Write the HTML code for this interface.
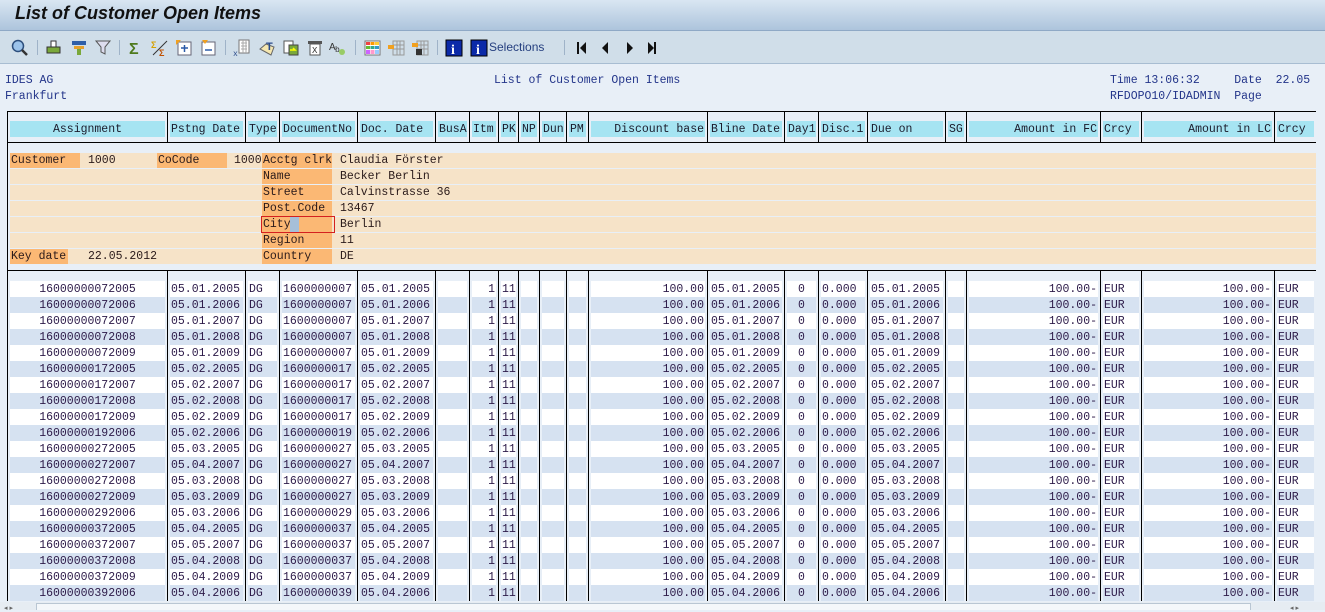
<!DOCTYPE html>
<html><head><meta charset="utf-8"><style>
*{margin:0;padding:0;box-sizing:border-box}
body{width:1325px;height:610px;overflow:hidden;background:#e8eff7;font-family:"Liberation Mono",monospace;font-size:11.5px;position:relative}
.a{position:absolute}
#title{left:0;top:0;width:1325px;height:31px;background:linear-gradient(#d9e6f2,#adc4dc);border-bottom:1px solid #8fa9c6}
#title span{position:absolute;left:15px;top:3px;font:italic bold 18px "Liberation Sans",sans-serif;color:#111}
#tb{left:0;top:31px;width:1325px;height:33px;background:#d0dee9;border-bottom:1px solid #a8bdd2}
.ic{position:absolute;top:8px}
.sep{position:absolute;top:9px;width:1px;height:15px;background:#9fb3c8}
.hd{color:#23358a;line-height:16px}
.row{position:absolute;left:7px;height:16px;display:grid;grid-template-columns:160px 78px 34px 78px 78px 34px 29px 20px 21px 27px 22px 119px 77px 34px 49px 78px 21px 134px 41px 133px 42px;line-height:17px}
.row>div{margin:0 2px 0 3px;white-space:nowrap;overflow:hidden;padding:0 1px;height:16px}
.hr>div{background:#a6e4f2;color:#1b1b2b}
.dr{color:#2c1a48}
.w>div{background:#fff}.b>div{background:#d6e2f1}
.r{text-align:right}.c{text-align:center}
.vl{position:absolute;width:1px;background:#000}
.ob{position:absolute;left:10px;width:1306px;height:15px;background:#f6e3c8}
.ol{position:absolute;height:15px;background:#fbb874;line-height:16px;padding-left:1px;color:#2a1a1a;white-space:nowrap}
.ov{position:absolute;line-height:16px;color:#2a1a1a}
</style></head><body>
<div id="title" class="a"><span>List of Customer Open Items</span></div>
<div id="tb" class="a">
<svg class="ic" style="left:11px" width="18" height="18"><circle cx="7" cy="7" r="5.5" fill="#9cc3ea" stroke="#2c4e7c" stroke-width="1.5"/><path d="M11 11l5 5" stroke="#333" stroke-width="2.5"/></svg>
<div class="sep" style="left:37px"></div>
<svg class="ic" style="left:45px" width="18" height="18"><rect x="6" y="2" width="5" height="6" fill="#fff" stroke="#333"/><rect x="2" y="8" width="13" height="6" fill="#7aa83a" stroke="#333"/></svg>
<svg class="ic" style="left:70px" width="18" height="18"><rect x="2" y="2" width="14" height="4" fill="#2f5fa8"/><rect x="4" y="7" width="10" height="3" fill="#e5a02c"/><rect x="7" y="10" width="4" height="6" fill="#7aa83a"/></svg>
<svg class="ic" style="left:94px" width="18" height="18"><path d="M2 2h14l-5 6v7l-4-2V8z" fill="#dde" stroke="#555"/></svg>
<div class="sep" style="left:119px"></div>
<svg class="ic" style="left:127px" width="18" height="18"><text x="2" y="15" font-size="16" font-weight="bold" fill="#4e7a1c" font-family="Liberation Sans">Σ</text></svg>
<svg class="ic" style="left:151px" width="18" height="18"><text x="0" y="9" font-size="9" font-weight="bold" fill="#d4a000" font-family="Liberation Sans">Σ</text><path d="M2 16L16 2" stroke="#333"/><text x="8" y="17" font-size="9" font-weight="bold" fill="#c05000" font-family="Liberation Sans">Σ</text></svg>
<svg class="ic" style="left:175px" width="18" height="18"><rect x="3" y="3" width="13" height="13" fill="#fff" stroke="#667"/><path d="M6 9h7M9.5 6v7" stroke="#2a5aa8" stroke-width="1.5"/><path d="M1 1h5L1 6z" fill="#f0a020"/></svg>
<svg class="ic" style="left:199px" width="18" height="18"><rect x="3" y="3" width="13" height="13" fill="#fff" stroke="#667"/><path d="M6 11h7" stroke="#2a5aa8" stroke-width="1.5"/><path d="M3 1h6L6 5z" fill="#f0a020"/></svg>
<div class="sep" style="left:225px"></div>
<svg class="ic" style="left:233px" width="18" height="18"><rect x="6" y="1" width="10" height="13" fill="#fff" stroke="#777"/><path d="M8 4h6M8 7h6M8 10h6M10 1v13M13 1v13" stroke="#aaa"/><text x="0" y="17" font-size="8" fill="#2a4a8a">x</text></svg>
<svg class="ic" style="left:258px" width="18" height="18"><path d="M2 10l6-5 8 3-3 8z" fill="#f5e7b0" stroke="#666"/><text x="8" y="11" font-size="11" font-weight="bold" fill="#2a4a8a" font-family="Liberation Sans">T</text></svg>
<svg class="ic" style="left:282px" width="18" height="18"><rect x="2" y="2" width="9" height="12" fill="#fff" stroke="#555"/><rect x="7" y="6" width="9" height="10" fill="#7aa83a" stroke="#444"/><path d="M8 11h5l-2-2" stroke="#ff0" stroke-width="1.5" fill="none"/></svg>
<svg class="ic" style="left:306px" width="18" height="18"><rect x="2" y="2" width="14" height="3" fill="#555"/><rect x="4" y="5" width="10" height="11" fill="#fff" stroke="#555"/><text x="6" y="14" font-size="9" fill="#333">X</text></svg>
<svg class="ic" style="left:329px" width="18" height="18"><text x="0" y="11" font-size="10" fill="#333" font-family="Liberation Sans">A</text><text x="6" y="13" font-size="8" fill="#333">b</text><circle cx="13" cy="13" r="3" fill="#9c6"/></svg>
<div class="sep" style="left:355px"></div>
<svg class="ic" style="left:363px" width="18" height="18"><rect x="2" y="2" width="15" height="14" fill="#fff" stroke="#777"/><rect x="3" y="3" width="4" height="3" fill="#e44"/><rect x="7.5" y="3" width="4" height="3" fill="#f90"/><rect x="12" y="3" width="4" height="3" fill="#fc3"/><rect x="3" y="7" width="4" height="3" fill="#6b3"/><rect x="7.5" y="7" width="4" height="3" fill="#3a8"/><rect x="12" y="7" width="4" height="3" fill="#39c"/><rect x="3" y="11" width="4" height="4" fill="#c6f"/><rect x="7.5" y="11" width="4" height="4" fill="#f9c"/><rect x="12" y="11" width="4" height="4" fill="#9cf"/></svg>
<svg class="ic" style="left:387px" width="18" height="18"><path d="M6 2h11v14H6zM6 6h11M6 10h11M10 2v14M13 2v14" stroke="#999" fill="none"/><rect x="1" y="6" width="6" height="4" fill="#f0a020"/></svg>
<svg class="ic" style="left:411px" width="18" height="18"><path d="M6 2h11v14H6zM6 6h11M6 10h11M10 2v14M13 2v14" stroke="#999" fill="none"/><rect x="1" y="4" width="6" height="4" fill="#f0a020"/><rect x="5" y="10" width="6" height="6" fill="#333"/></svg>
<div class="sep" style="left:437px"></div>
<svg class="ic" style="left:445px" width="18" height="18"><rect x="1" y="1" width="16" height="16" fill="#0b2aa8" stroke="#000"/><text x="6" y="15" font-size="14" font-weight="bold" fill="#fff" font-family="Liberation Serif">i</text></svg>
<svg class="ic" style="left:470px" width="18" height="18"><rect x="1" y="1" width="16" height="16" fill="#0b2aa8" stroke="#000"/><text x="6" y="15" font-size="14" font-weight="bold" fill="#fff" font-family="Liberation Serif">i</text></svg>
<span class="a" style="left:489px;top:9px;font:12px 'Liberation Sans',sans-serif;color:#253f7f">Selections</span>
<div class="sep" style="left:564px"></div>
<svg class="ic" style="left:573px" width="90" height="18"><path d="M5 3v12" stroke="#111" stroke-width="2"/><path d="M13 3v12L7 9z" fill="#111"/><path d="M35 3v12l-6-6z" fill="#111"/><path d="M54 3v12l6-6z" fill="#111"/><path d="M75 3v12l6-6z" fill="#111"/><path d="M82 3v12" stroke="#111" stroke-width="2"/></svg>
</div>
<div class="a hd" style="left:5px;top:73px">IDES AG</div>
<div class="a hd" style="left:5px;top:89px">Frankfurt</div>
<div class="a hd" style="left:494px;top:73px">List of Customer Open Items</div>
<div class="a hd" style="left:1110px;top:73px;white-space:pre">Time 13:06:32     Date  22.05</div>
<div class="a hd" style="left:1110px;top:89px;white-space:pre">RFDOPO10/IDADMIN  Page</div>

<div class="a" style="left:7px;top:111px;width:1309px;height:1px;background:#000"></div>
<div class="a" style="left:7px;top:142px;width:1309px;height:1px;background:#000"></div>
<div class="a" style="left:7px;top:270px;width:1309px;height:1px;background:#000"></div>

<div class="row hr" style="top:121px"><div class="c">Assignment</div><div>Pstng Date</div><div>Type</div><div>DocumentNo</div><div>Doc. Date</div><div>BusA</div><div>Itm</div><div>PK</div><div>NP</div><div>Dun</div><div>PM</div><div class="r">Discount base</div><div>Bline Date</div><div>Day1</div><div>Disc.1</div><div>Due on</div><div>SG</div><div class="r">Amount in FC</div><div>Crcy</div><div class="r">Amount in LC</div><div>Crcy</div></div>

<div class="ob" style="top:153px"></div><div class="ob" style="top:169px"></div><div class="ob" style="top:185px"></div><div class="ob" style="top:201px"></div><div class="ob" style="top:217px"></div><div class="ob" style="top:233px"></div><div class="ob" style="top:249px"></div>
<div class="ol" style="left:10px;top:153px;width:70px">Customer</div><div class="ov" style="left:88px;top:153px">1000</div>
<div class="ol" style="left:157px;top:153px;width:70px">CoCode</div><div class="ov" style="left:234px;top:153px">1000</div>
<div class="ol" style="left:262px;top:153px;width:70px">Acctg clrk</div><div class="ov" style="left:340px;top:153px">Claudia Förster</div>
<div class="ol" style="left:262px;top:169px;width:70px">Name</div><div class="ov" style="left:340px;top:169px">Becker Berlin</div>
<div class="ol" style="left:262px;top:185px;width:70px">Street</div><div class="ov" style="left:340px;top:185px">Calvinstrasse 36</div>
<div class="ol" style="left:262px;top:201px;width:70px">Post.Code</div><div class="ov" style="left:340px;top:201px">13467</div>
<div class="ol" style="left:262px;top:217px;width:70px">City</div><div class="a" style="left:290px;top:217px;width:9px;height:15px;background:#a6bfd8"></div><div class="a" style="left:261px;top:216px;width:74px;height:17px;border:1px solid #d42020"></div><div class="ov" style="left:340px;top:217px">Berlin</div>
<div class="ol" style="left:262px;top:233px;width:70px">Region</div><div class="ov" style="left:340px;top:233px">11</div>
<div class="ol" style="left:10px;top:249px;width:58px">Key date</div><div class="ov" style="left:88px;top:249px">22.05.2012</div>
<div class="ol" style="left:262px;top:249px;width:70px">Country</div><div class="ov" style="left:340px;top:249px">DE</div>

<div class="row dr w" style="top:281px"><div class="c">16000000072005</div><div>05.01.2005</div><div>DG</div><div>1600000007</div><div>05.01.2005</div><div></div><div class="r">1</div><div>11</div><div></div><div></div><div></div><div class="r">100.00</div><div>05.01.2005</div><div class="c">0</div><div>0.000</div><div>05.01.2005</div><div></div><div class="r">100.00-</div><div>EUR</div><div class="r">100.00-</div><div>EUR</div></div>
<div class="row dr b" style="top:297px"><div class="c">16000000072006</div><div>05.01.2006</div><div>DG</div><div>1600000007</div><div>05.01.2006</div><div></div><div class="r">1</div><div>11</div><div></div><div></div><div></div><div class="r">100.00</div><div>05.01.2006</div><div class="c">0</div><div>0.000</div><div>05.01.2006</div><div></div><div class="r">100.00-</div><div>EUR</div><div class="r">100.00-</div><div>EUR</div></div>
<div class="row dr w" style="top:313px"><div class="c">16000000072007</div><div>05.01.2007</div><div>DG</div><div>1600000007</div><div>05.01.2007</div><div></div><div class="r">1</div><div>11</div><div></div><div></div><div></div><div class="r">100.00</div><div>05.01.2007</div><div class="c">0</div><div>0.000</div><div>05.01.2007</div><div></div><div class="r">100.00-</div><div>EUR</div><div class="r">100.00-</div><div>EUR</div></div>
<div class="row dr b" style="top:329px"><div class="c">16000000072008</div><div>05.01.2008</div><div>DG</div><div>1600000007</div><div>05.01.2008</div><div></div><div class="r">1</div><div>11</div><div></div><div></div><div></div><div class="r">100.00</div><div>05.01.2008</div><div class="c">0</div><div>0.000</div><div>05.01.2008</div><div></div><div class="r">100.00-</div><div>EUR</div><div class="r">100.00-</div><div>EUR</div></div>
<div class="row dr w" style="top:345px"><div class="c">16000000072009</div><div>05.01.2009</div><div>DG</div><div>1600000007</div><div>05.01.2009</div><div></div><div class="r">1</div><div>11</div><div></div><div></div><div></div><div class="r">100.00</div><div>05.01.2009</div><div class="c">0</div><div>0.000</div><div>05.01.2009</div><div></div><div class="r">100.00-</div><div>EUR</div><div class="r">100.00-</div><div>EUR</div></div>
<div class="row dr b" style="top:361px"><div class="c">16000000172005</div><div>05.02.2005</div><div>DG</div><div>1600000017</div><div>05.02.2005</div><div></div><div class="r">1</div><div>11</div><div></div><div></div><div></div><div class="r">100.00</div><div>05.02.2005</div><div class="c">0</div><div>0.000</div><div>05.02.2005</div><div></div><div class="r">100.00-</div><div>EUR</div><div class="r">100.00-</div><div>EUR</div></div>
<div class="row dr w" style="top:377px"><div class="c">16000000172007</div><div>05.02.2007</div><div>DG</div><div>1600000017</div><div>05.02.2007</div><div></div><div class="r">1</div><div>11</div><div></div><div></div><div></div><div class="r">100.00</div><div>05.02.2007</div><div class="c">0</div><div>0.000</div><div>05.02.2007</div><div></div><div class="r">100.00-</div><div>EUR</div><div class="r">100.00-</div><div>EUR</div></div>
<div class="row dr b" style="top:393px"><div class="c">16000000172008</div><div>05.02.2008</div><div>DG</div><div>1600000017</div><div>05.02.2008</div><div></div><div class="r">1</div><div>11</div><div></div><div></div><div></div><div class="r">100.00</div><div>05.02.2008</div><div class="c">0</div><div>0.000</div><div>05.02.2008</div><div></div><div class="r">100.00-</div><div>EUR</div><div class="r">100.00-</div><div>EUR</div></div>
<div class="row dr w" style="top:409px"><div class="c">16000000172009</div><div>05.02.2009</div><div>DG</div><div>1600000017</div><div>05.02.2009</div><div></div><div class="r">1</div><div>11</div><div></div><div></div><div></div><div class="r">100.00</div><div>05.02.2009</div><div class="c">0</div><div>0.000</div><div>05.02.2009</div><div></div><div class="r">100.00-</div><div>EUR</div><div class="r">100.00-</div><div>EUR</div></div>
<div class="row dr b" style="top:425px"><div class="c">16000000192006</div><div>05.02.2006</div><div>DG</div><div>1600000019</div><div>05.02.2006</div><div></div><div class="r">1</div><div>11</div><div></div><div></div><div></div><div class="r">100.00</div><div>05.02.2006</div><div class="c">0</div><div>0.000</div><div>05.02.2006</div><div></div><div class="r">100.00-</div><div>EUR</div><div class="r">100.00-</div><div>EUR</div></div>
<div class="row dr w" style="top:441px"><div class="c">16000000272005</div><div>05.03.2005</div><div>DG</div><div>1600000027</div><div>05.03.2005</div><div></div><div class="r">1</div><div>11</div><div></div><div></div><div></div><div class="r">100.00</div><div>05.03.2005</div><div class="c">0</div><div>0.000</div><div>05.03.2005</div><div></div><div class="r">100.00-</div><div>EUR</div><div class="r">100.00-</div><div>EUR</div></div>
<div class="row dr b" style="top:457px"><div class="c">16000000272007</div><div>05.04.2007</div><div>DG</div><div>1600000027</div><div>05.04.2007</div><div></div><div class="r">1</div><div>11</div><div></div><div></div><div></div><div class="r">100.00</div><div>05.04.2007</div><div class="c">0</div><div>0.000</div><div>05.04.2007</div><div></div><div class="r">100.00-</div><div>EUR</div><div class="r">100.00-</div><div>EUR</div></div>
<div class="row dr w" style="top:473px"><div class="c">16000000272008</div><div>05.03.2008</div><div>DG</div><div>1600000027</div><div>05.03.2008</div><div></div><div class="r">1</div><div>11</div><div></div><div></div><div></div><div class="r">100.00</div><div>05.03.2008</div><div class="c">0</div><div>0.000</div><div>05.03.2008</div><div></div><div class="r">100.00-</div><div>EUR</div><div class="r">100.00-</div><div>EUR</div></div>
<div class="row dr b" style="top:489px"><div class="c">16000000272009</div><div>05.03.2009</div><div>DG</div><div>1600000027</div><div>05.03.2009</div><div></div><div class="r">1</div><div>11</div><div></div><div></div><div></div><div class="r">100.00</div><div>05.03.2009</div><div class="c">0</div><div>0.000</div><div>05.03.2009</div><div></div><div class="r">100.00-</div><div>EUR</div><div class="r">100.00-</div><div>EUR</div></div>
<div class="row dr w" style="top:505px"><div class="c">16000000292006</div><div>05.03.2006</div><div>DG</div><div>1600000029</div><div>05.03.2006</div><div></div><div class="r">1</div><div>11</div><div></div><div></div><div></div><div class="r">100.00</div><div>05.03.2006</div><div class="c">0</div><div>0.000</div><div>05.03.2006</div><div></div><div class="r">100.00-</div><div>EUR</div><div class="r">100.00-</div><div>EUR</div></div>
<div class="row dr b" style="top:521px"><div class="c">16000000372005</div><div>05.04.2005</div><div>DG</div><div>1600000037</div><div>05.04.2005</div><div></div><div class="r">1</div><div>11</div><div></div><div></div><div></div><div class="r">100.00</div><div>05.04.2005</div><div class="c">0</div><div>0.000</div><div>05.04.2005</div><div></div><div class="r">100.00-</div><div>EUR</div><div class="r">100.00-</div><div>EUR</div></div>
<div class="row dr w" style="top:537px"><div class="c">16000000372007</div><div>05.05.2007</div><div>DG</div><div>1600000037</div><div>05.05.2007</div><div></div><div class="r">1</div><div>11</div><div></div><div></div><div></div><div class="r">100.00</div><div>05.05.2007</div><div class="c">0</div><div>0.000</div><div>05.05.2007</div><div></div><div class="r">100.00-</div><div>EUR</div><div class="r">100.00-</div><div>EUR</div></div>
<div class="row dr b" style="top:553px"><div class="c">16000000372008</div><div>05.04.2008</div><div>DG</div><div>1600000037</div><div>05.04.2008</div><div></div><div class="r">1</div><div>11</div><div></div><div></div><div></div><div class="r">100.00</div><div>05.04.2008</div><div class="c">0</div><div>0.000</div><div>05.04.2008</div><div></div><div class="r">100.00-</div><div>EUR</div><div class="r">100.00-</div><div>EUR</div></div>
<div class="row dr w" style="top:569px"><div class="c">16000000372009</div><div>05.04.2009</div><div>DG</div><div>1600000037</div><div>05.04.2009</div><div></div><div class="r">1</div><div>11</div><div></div><div></div><div></div><div class="r">100.00</div><div>05.04.2009</div><div class="c">0</div><div>0.000</div><div>05.04.2009</div><div></div><div class="r">100.00-</div><div>EUR</div><div class="r">100.00-</div><div>EUR</div></div>
<div class="row dr b" style="top:585px"><div class="c">16000000392006</div><div>05.04.2006</div><div>DG</div><div>1600000039</div><div>05.04.2006</div><div></div><div class="r">1</div><div>11</div><div></div><div></div><div></div><div class="r">100.00</div><div>05.04.2006</div><div class="c">0</div><div>0.000</div><div>05.04.2006</div><div></div><div class="r">100.00-</div><div>EUR</div><div class="r">100.00-</div><div>EUR</div></div>

<div class="vl" style="left:7px;top:111px;height:490px"></div>
<div class="vl" style="left:167px;top:111px;height:32px"></div><div class="vl" style="left:167px;top:270px;height:331px"></div>
<div class="vl" style="left:245px;top:111px;height:32px"></div><div class="vl" style="left:245px;top:270px;height:331px"></div>
<div class="vl" style="left:279px;top:111px;height:32px"></div><div class="vl" style="left:279px;top:270px;height:331px"></div>
<div class="vl" style="left:357px;top:111px;height:32px"></div><div class="vl" style="left:357px;top:270px;height:331px"></div>
<div class="vl" style="left:435px;top:111px;height:32px"></div><div class="vl" style="left:435px;top:270px;height:331px"></div>
<div class="vl" style="left:469px;top:111px;height:32px"></div><div class="vl" style="left:469px;top:270px;height:331px"></div>
<div class="vl" style="left:498px;top:111px;height:32px"></div><div class="vl" style="left:498px;top:270px;height:331px"></div>
<div class="vl" style="left:518px;top:111px;height:32px"></div><div class="vl" style="left:518px;top:270px;height:331px"></div>
<div class="vl" style="left:539px;top:111px;height:32px"></div><div class="vl" style="left:539px;top:270px;height:331px"></div>
<div class="vl" style="left:566px;top:111px;height:32px"></div><div class="vl" style="left:566px;top:270px;height:331px"></div>
<div class="vl" style="left:588px;top:111px;height:32px"></div><div class="vl" style="left:588px;top:270px;height:331px"></div>
<div class="vl" style="left:707px;top:111px;height:32px"></div><div class="vl" style="left:707px;top:270px;height:331px"></div>
<div class="vl" style="left:784px;top:111px;height:32px"></div><div class="vl" style="left:784px;top:270px;height:331px"></div>
<div class="vl" style="left:818px;top:111px;height:32px"></div><div class="vl" style="left:818px;top:270px;height:331px"></div>
<div class="vl" style="left:867px;top:111px;height:32px"></div><div class="vl" style="left:867px;top:270px;height:331px"></div>
<div class="vl" style="left:945px;top:111px;height:32px"></div><div class="vl" style="left:945px;top:270px;height:331px"></div>
<div class="vl" style="left:966px;top:111px;height:32px"></div><div class="vl" style="left:966px;top:270px;height:331px"></div>
<div class="vl" style="left:1100px;top:111px;height:32px"></div><div class="vl" style="left:1100px;top:270px;height:331px"></div>
<div class="vl" style="left:1141px;top:111px;height:32px"></div><div class="vl" style="left:1141px;top:270px;height:331px"></div>
<div class="vl" style="left:1274px;top:111px;height:32px"></div><div class="vl" style="left:1274px;top:270px;height:331px"></div>

<div class="a" style="left:0;top:602px;width:1325px;height:8px;background:#e6ecf2"></div>
<div class="a" style="left:36px;top:603px;width:1215px;height:7px;background:#f4f7fa;border:1px solid #b9c6d3;border-bottom:none"></div>
<div class="a" style="left:4px;top:604px;font:7px 'Liberation Sans';color:#666">◂ ▸</div>
<div class="a" style="left:1290px;top:604px;font:7px 'Liberation Sans';color:#666">◂ ▸</div>
</body></html>
